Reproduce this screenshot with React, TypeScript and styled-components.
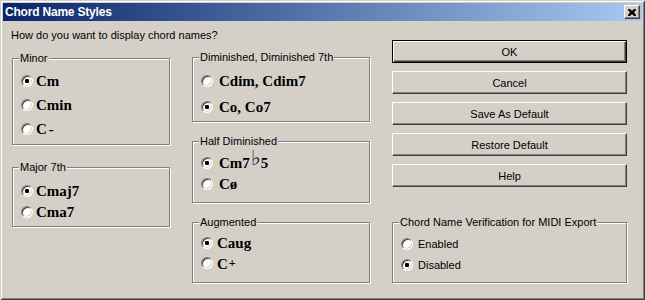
import styled, { createGlobalStyle } from 'styled-components';

const GlobalStyle = createGlobalStyle`
	* {
		box-sizing: border-box;
	}
	html,
	body {
		margin: 0;
		padding: 0;
		background: #d4d0c8;
	}
	body {
		font-family: 'Liberation Sans', Arial, sans-serif;
		font-size: 11px;
		color: #000;
	}
`;

// small glyph tweaks used inside the chord labels
const Dash = styled.span`
	margin-left: 2px;
`;

const Flat = styled.span`
	font-family: 'DejaVu Sans', sans-serif;
	font-weight: normal;
	font-size: 21px;
	line-height: 0;
	color: #0a1a4a;
	vertical-align: 3px;
	margin: 0 0 0 1px;
`;

const Plus = styled.span`
	font-size: 12px;
	vertical-align: 2px;
	margin-left: 1px;
`;

interface IOption {
	label: React.ReactNode;
	checked?: boolean;
}

interface IGroup {
	caption: string;
	height: number;
	padTop: number;
	gap: number;
	labelGap: number;
	plain?: boolean;
	options: IOption[];
}

const minor: IGroup = {
	caption: 'Minor',
	height: 87,
	padTop: 14,
	gap: 8,
	labelGap: 3,
	options: [
		{ label: 'Cm', checked: true },
		{ label: 'Cmin' },
		{ label: <>C<Dash>-</Dash></> },
	],
};

const major: IGroup = {
	caption: 'Major 7th',
	height: 60,
	padTop: 15,
	gap: 5,
	labelGap: 3,
	options: [{ label: 'Cmaj7', checked: true }, { label: 'Cma7' }],
};

const diminished: IGroup = {
	caption: 'Diminished, Diminished 7th',
	height: 65,
	padTop: 15,
	gap: 10,
	labelGap: 6,
	options: [{ label: 'Cdim, Cdim7' }, { label: 'Co, Co7', checked: true }],
};

const halfDiminished: IGroup = {
	caption: 'Half Diminished',
	height: 62,
	padTop: 13,
	gap: 5,
	labelGap: 6,
	options: [
		{ label: <>Cm7<Flat>♭</Flat>5</>, checked: true },
		{ label: 'Cø' },
	],
};

const augmented: IGroup = {
	caption: 'Augmented',
	height: 61,
	padTop: 12,
	gap: 4,
	labelGap: 4,
	options: [
		{ label: 'Caug', checked: true },
		{ label: <>C<Plus>+</Plus></> },
	],
};

const verification: IGroup = {
	caption: 'Chord Name Verification for MIDI Export',
	height: 61,
	padTop: 13,
	gap: 5,
	labelGap: 5,
	plain: true,
	options: [{ label: 'Enabled' }, { label: 'Disabled', checked: true }],
};

const buttons = ['OK', 'Cancel', 'Save As Default', 'Restore Default', 'Help'];

const Group = ({ group }: { group: IGroup }) => {
	return (
		<GroupBox $height={group.height}>
			<GroupCaption>{group.caption}</GroupCaption>
			<Options $padTop={group.padTop} $gap={group.gap}>
				{group.options.map((option, id) => {
					return (
						<Option key={id} $labelGap={group.labelGap}>
							<Radio $checked={!!option.checked} />
							{group.plain ? (
								<PlainLabel>{option.label}</PlainLabel>
							) : (
								<ChordLabel>{option.label}</ChordLabel>
							)}
						</Option>
					);
				})}
			</Options>
		</GroupBox>
	);
};

const App = () => {
	return (
		<>
			<GlobalStyle />
			<Window>
				<TitleBar>
					<Title>Chord Name Styles</Title>
					<CloseButton type='button' aria-label='Close'>
						<svg width='8' height='7' viewBox='0 0 8 7'>
							<path
								d='M0 0h2l2 2 2-2h2v1L6 3.5 8 6v1H6L4 5 2 7H0V6l2-2.5L0 1z'
								fill='#000'
							/>
						</svg>
					</CloseButton>
				</TitleBar>
				<Content>
					<Prompt>How do you want to display chord names?</Prompt>
					<Column $offset={16} $gap={22}>
						<Group group={minor} />
						<Group group={major} />
					</Column>
					<Column $offset={15} $gap={19}>
						<Group group={diminished} />
						<Group group={halfDiminished} />
						<Group group={augmented} />
					</Column>
					<SideColumn>
						{buttons.map((label, id) => {
							return (
								<Button key={label} type='button' $default={id === 0}>
									{label}
								</Button>
							);
						})}
						<Spacer />
						<Group group={verification} />
					</SideColumn>
				</Content>
			</Window>
		</>
	);
};

const Window = styled.div`
	width: 645px;
	height: 300px;
	padding: 3px;
	display: flex;
	flex-direction: column;
	background: #d4d0c8;
	box-shadow: inset 1px 1px 0 #d4d0c8, inset -1px -1px 0 #404040,
		inset 2px 2px 0 #fff, inset -2px -2px 0 #808080;
`;

const TitleBar = styled.div`
	height: 18px;
	display: flex;
	align-items: center;
	justify-content: space-between;
	padding: 0 2px 0 2px;
	background: linear-gradient(to right, #0a246a, #a6caf0);
`;

const Title = styled.span`
	color: #fff;
	font-weight: bold;
	font-size: 12px;
	letter-spacing: -0.2px;
	line-height: 18px;
`;

const CloseButton = styled.button`
	width: 16px;
	height: 14px;
	padding: 0;
	display: flex;
	align-items: center;
	justify-content: center;
	background: #d4d0c8;
	border: 1px solid;
	border-color: #fff #404040 #404040 #fff;
	box-shadow: inset -1px -1px 0 #808080;
`;

const Content = styled.div`
	display: grid;
	grid-template-columns: 158px 178px 235px;
	grid-template-rows: auto auto;
	column-gap: 22px;
	padding: 8px 0 0 9px;
`;

const Prompt = styled.div`
	grid-column: 1 / 3;
	line-height: 13px;
	margin-left: -1px;
`;

const Column = styled.div<{ $offset: number; $gap: number }>`
	grid-row: 2;
	display: flex;
	flex-direction: column;
	padding-top: ${(p) => p.$offset}px;
	gap: ${(p) => p.$gap}px;
`;

const SideColumn = styled.div`
	grid-column: 3;
	grid-row: 1 / 3;
	display: flex;
	flex-direction: column;
	padding-top: 11px;
	gap: 8px;
`;

const Spacer = styled.div`
	flex: 1;
`;

const Button = styled.button<{ $default: boolean }>`
	height: 23px;
	width: 100%;
	padding: 0;
	font-family: 'Liberation Sans', Arial, sans-serif;
	font-size: 11px;
	color: #000;
	background: #d4d0c8;
	border: 1px solid;
	border-color: ${(p) =>
		p.$default ? '#000' : '#fff #404040 #404040 #fff'};
	box-shadow: ${(p) =>
		p.$default
			? 'inset 1px 1px 0 #fff, inset -1px -1px 0 #404040, inset -2px -2px 0 #808080'
			: 'inset -1px -1px 0 #808080'};
`;

const GroupBox = styled.div<{ $height: number }>`
	position: relative;
	height: ${(p) => p.$height}px;
	border: 1px solid #808080;
	box-shadow: inset 1px 1px 0 #fff, 1px 1px 0 #fff;
`;

const GroupCaption = styled.span`
	position: absolute;
	top: -7px;
	left: 6px;
	padding: 0 1px;
	line-height: 13px;
	background: #d4d0c8;
`;

const Options = styled.div<{ $padTop: number; $gap: number }>`
	display: flex;
	flex-direction: column;
	padding: ${(p) => p.$padTop}px 0 0 8px;
	gap: ${(p) => p.$gap}px;
`;

const Option = styled.label<{ $labelGap: number }>`
	height: 16px;
	display: flex;
	align-items: center;
	gap: ${(p) => p.$labelGap}px;
`;

const Radio = styled.span<{ $checked: boolean }>`
	position: relative;
	flex: none;
	width: 12px;
	height: 12px;
	border-radius: 50%;
	background: #fff;
	border: 1px solid;
	border-color: #808080 #fff #fff #808080;
	box-shadow: inset 1px 1px 0 #404040, inset -1px -1px 0 #d4d0c8;

	&::after {
		content: '';
		display: ${(p) => (p.$checked ? 'block' : 'none')};
		position: absolute;
		left: 3px;
		top: 3px;
		width: 4px;
		height: 4px;
		border-radius: 1px;
		background: #000;
	}
`;

const ChordLabel = styled.span`
	font-family: 'Liberation Serif', 'Times New Roman', serif;
	font-weight: bold;
	font-size: 15px;
	line-height: 16px;
	white-space: nowrap;
`;

const PlainLabel = styled.span`
	line-height: 13px;
`;

export default App;
